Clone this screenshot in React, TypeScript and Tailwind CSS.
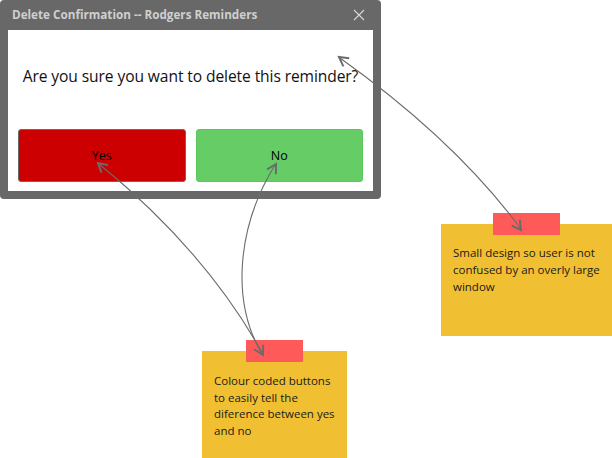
import React from "react";

function Arrowhead({ x, y, angle }: { x: number; y: number; angle: number }) {
  return (
    <g transform={`translate(${x} ${y}) rotate(${angle})`}>
      <path d="M -9 -5 L 0 0 L -9 5" fill="none" stroke="#6b6b6b" strokeWidth="2" strokeLinejoin="miter" />
    </g>
  );
}

export default function App() {
  return (
    <div className="relative w-[612px] h-[458px] bg-white overflow-hidden font-['Open_Sans',sans-serif]">
      {/* Dialog window */}
      <div className="w-[381px] h-[199px] bg-[#686868] rounded-[4px] flex flex-col px-[8px] pb-[8px]">
        <div className="h-[30px] flex items-center justify-between pl-[4px] pr-[8px]">
          <span className="text-[11.7px] font-bold text-[#cfcfcf] whitespace-nowrap">
            Delete Confirmation -- Rodgers Reminders
          </span>
          <svg width="12" height="12" viewBox="0 0 12 12">
            <path d="M1 1 L11 11 M11 1 L1 11" stroke="#d8d8d8" strokeWidth="1.1" />
          </svg>
        </div>
        <div className="flex-1 bg-white flex flex-col px-[10px]">
          <div className="h-[99px] flex items-center justify-center pb-[6px]">
            <span className="text-[15.6px] text-[#111] whitespace-nowrap tracking-[-0.1px]">
              Are you sure you want to delete this reminder?
            </span>
          </div>
          <div className="flex gap-[10px]">
            <div className="w-[168px] h-[53px] bg-[#cc0000] border border-[#6a6a6a] rounded-[3px] flex items-center justify-center pt-[2px]">
              <span className="text-[12.5px] text-black">Yes</span>
            </div>
            <div className="w-[168px] h-[53px] bg-[#66cc66] border border-[#5cc85c] rounded-[3px] flex items-center justify-center pt-[2px]">
              <span className="text-[12.5px] text-black">No</span>
            </div>
          </div>
        </div>
      </div>

      {/* Note 1 */}
      <div className="absolute left-[441px] top-[224px] w-[171px] h-[112px] bg-[#f0c032] px-[12px] pt-[20px]">
        <p className="text-[11.5px] leading-[17px] text-[#1a1a1a]">
          Small design so user is not confused by an overly large window
        </p>
      </div>
      <div className="absolute left-[493px] top-[213px] w-[67px] h-[22px] bg-[#ff5a5a]" />

      {/* Note 2 */}
      <div className="absolute left-[202px] top-[351px] w-[145px] h-[107px] bg-[#f0c032] px-[12px] pt-[22px]">
        <p className="text-[11.5px] leading-[16.5px] text-[#1a1a1a]">
          Colour coded buttons to easily tell the diference between yes and no
        </p>
      </div>
      <div className="absolute left-[246px] top-[340px] w-[57px] h-[22px] bg-[#ff5a5a]" />

      {/* Arrows */}
      <svg className="absolute left-0 top-0 pointer-events-none" width="612" height="458" viewBox="0 0 612 458">
        <g fill="none" stroke="#6b6b6b" strokeWidth="1.1">
          <path d="M 340 58 Q 455 140 521 229" />
          <path d="M 99 164 Q 205 250 263 354" />
          <path d="M 275 165 C 238 225 230 300 262 354" />
        </g>
        <Arrowhead x={339} y={57} angle={-144} />
        <Arrowhead x={521} y={230} angle={54} />
        <Arrowhead x={98} y={163} angle={-139} />
        <Arrowhead x={263} y={355} angle={62} />
        <Arrowhead x={276} y={164} angle={-60} />
      </svg>
    </div>
  );
}
